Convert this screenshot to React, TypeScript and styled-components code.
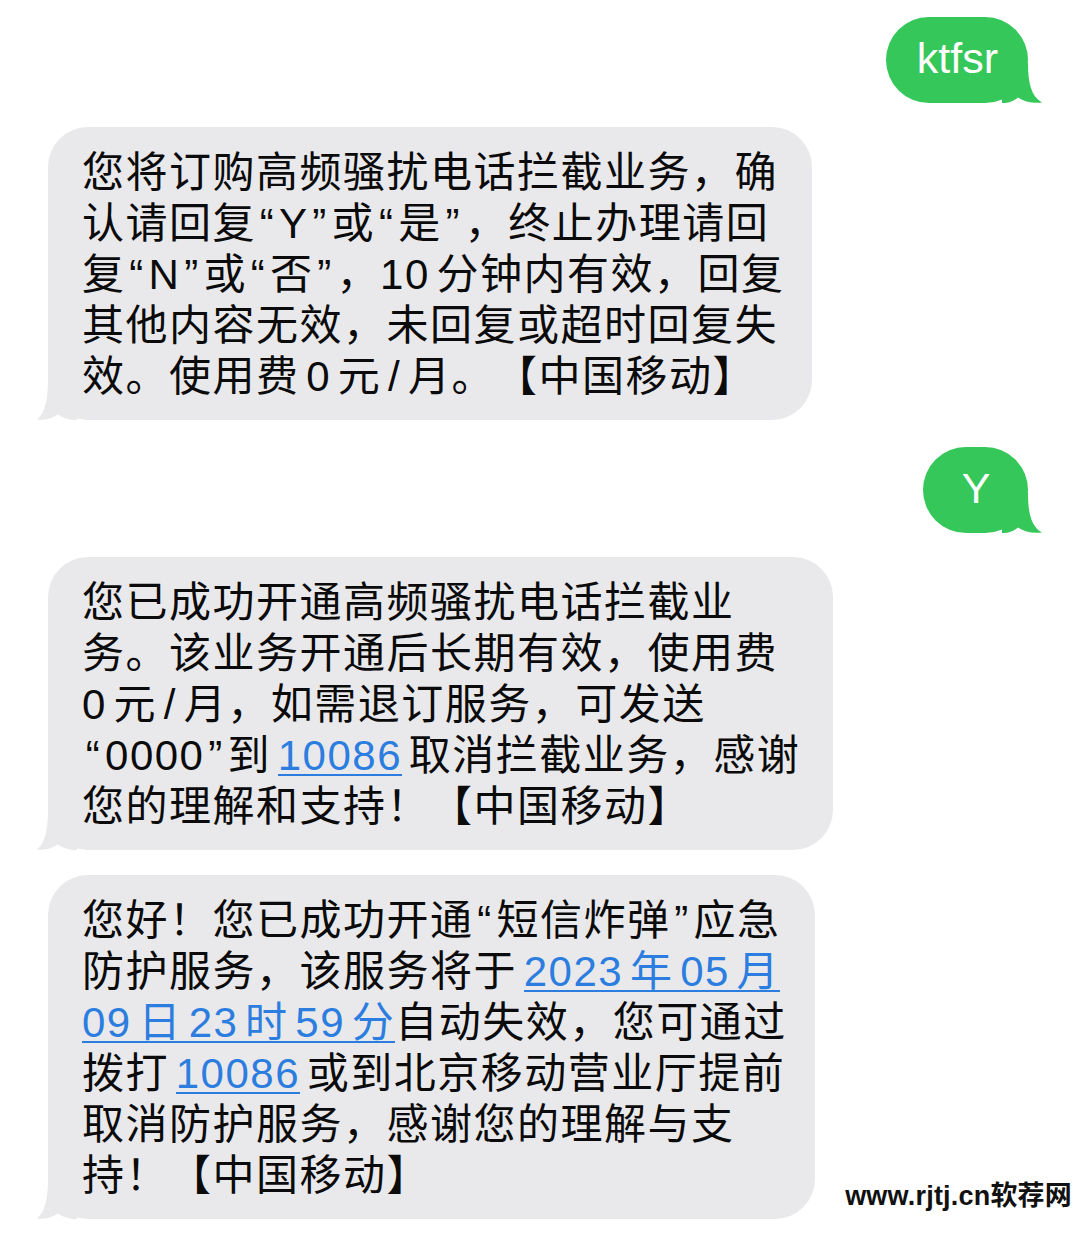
import React from 'react';
import styled, { createGlobalStyle } from 'styled-components';

const GlobalStyle = createGlobalStyle`
  html, body {
    margin: 0;
    padding: 0;
    background: #ffffff;
  }
  body {
    font-family: 'Liberation Sans', 'Noto Sans CJK SC', sans-serif;
    -webkit-font-smoothing: antialiased;
  }
`;

const Page = styled.div`
  position: relative;
  width: 1080px;
  height: 1240px;
  box-sizing: border-box;
  padding: 17px 52px 0 48px;
  background: #ffffff;
  display: flex;
  flex-direction: column;
  overflow: hidden;
`;

const Row = styled.div<{ $side: 'left' | 'right'; $top: number }>`
  display: flex;
  justify-content: ${({ $side }) => ($side === 'right' ? 'flex-end' : 'flex-start')};
  margin-top: ${({ $top }) => `${$top}px`};
`;

const Sent = styled.div`
  position: relative;
  height: 86px;
  min-width: 105px;
  box-sizing: border-box;
  padding: 0 30px 4px 31px;
  display: flex;
  align-items: center;
  justify-content: center;
  background: #35c759;
  border-radius: 43px;
  color: #ffffff;
  font-family: 'Liberation Sans', sans-serif;
  font-size: 43px;
  line-height: 1;
`;

const Received = styled.div<{ $width: number }>`
  position: relative;
  width: ${({ $width }) => `${$width}px`};
  box-sizing: border-box;
  padding: 20px 0 18px 34px;
  background: #e9e9eb;
  border-radius: 40px;
  color: #0b0b0b;
  font-family: 'Liberation Sans', 'Noto Sans CJK SC', sans-serif;
  font-size: 42px;
  letter-spacing: 1.5px;
  text-spacing-trim: space-all;
`;

const Line = styled.div`
  height: 51px;
  line-height: 51px;
  white-space: nowrap;
`;

const Latin = styled.span<{ $l: boolean; $r: boolean }>`
  padding-left: ${({ $l }) => ($l ? '0.16em' : '0')};
  padding-right: ${({ $r }) => ($r ? '0.16em' : '0')};
`;

const Quote = styled.span`
  padding: 0 0.09em;
`;

const Link = styled.span<{ $l: boolean; $r: boolean }>`
  color: #2b7ddf;
  margin-left: ${({ $l }) => ($l ? '0.16em' : '0')};
  margin-right: ${({ $r }) => ($r ? '0.16em' : '0')};
  background: linear-gradient(#2b7ddf, #2b7ddf) 0 calc(100% - 3px) / 100% 2px no-repeat;
`;

const TailSvg = styled.svg<{ $side: 'left' | 'right'; $offset: number }>`
  position: absolute;
  bottom: 0;
  width: 40px;
  height: 40px;
  ${({ $side, $offset }) =>
    $side === 'right'
      ? `right: -${$offset}px;`
      : `left: -${$offset}px; transform: scaleX(-1);`}
`;

const Watermark = styled.div`
  position: absolute;
  right: 8px;
  bottom: 27px;
  font-family: 'Liberation Sans', 'Noto Sans CJK SC', sans-serif;
  font-weight: 700;
  font-size: 27px;
  color: #111111;
  letter-spacing: 0.2px;
`;

const Tail = ({ side, color, offset }: { side: 'left' | 'right'; color: string; offset: number }) => {
  const edge = 40 - offset;
  return (
    <TailSvg $side={side} $offset={offset} viewBox="0 0 40 40">
      <path
        d={`M0 0 H${edge} C${edge} 20 ${edge + 3} 33 40 39.6 C${edge + 4} 40.6 ${edge - 4} 38.5 ${edge - 10} 34.5 C${edge - 14} 38 7 40 0 40 Z`}
        fill={color}
      />
    </TailSvg>
  );
};

type Part = string | { link: string };

const CJK = /[\u4e00-\u9fff]/;
const LATIN_RUN = /^[0-9A-Za-z/]+$/;
const TOKENS = /([0-9A-Za-z/]+|[“”])/;

// iOS puts a little air between CJK and Latin runs; mimic it per run
const spaced = (text: string, before: string, after: string, keyBase: string) => {
  const chunks = text.split(TOKENS).filter((c) => c !== '');
  return chunks.map((chunk, i) => {
    const key = `${keyBase}-${i}`;
    if (chunk === '“' || chunk === '”') return <Quote key={key}>{chunk}</Quote>;
    if (!LATIN_RUN.test(chunk)) return <React.Fragment key={key}>{chunk}</React.Fragment>;
    const prev = i > 0 ? chunks[i - 1].slice(-1) : before;
    const next = i < chunks.length - 1 ? chunks[i + 1][0] : after;
    return (
      <Latin key={key} $l={CJK.test(prev)} $r={CJK.test(next)}>
        {chunk}
      </Latin>
    );
  });
};

const partText = (p: Part) => (typeof p === 'string' ? p : p.link);

const renderLine = (parts: Part[]) =>
  parts.map((part, i) => {
    const before = i > 0 ? partText(parts[i - 1]).slice(-1) : '';
    const after = i < parts.length - 1 ? partText(parts[i + 1])[0] : '';
    if (typeof part === 'string') return <React.Fragment key={i}>{spaced(part, before, after, `${i}`)}</React.Fragment>;
    const text = part.link;
    return (
      <Link
        key={i}
        $l={CJK.test(before) && LATIN_RUN.test(text[0])}
        $r={CJK.test(after) && LATIN_RUN.test(text.slice(-1))}
      >
        {spaced(text, '', '', `${i}`)}
      </Link>
    );
  });

type Message =
  | { from: 'me'; text: string; top: number }
  | { from: 'them'; lines: Part[][]; width: number; top: number };

const messages: Message[] = [
  { from: 'me', text: 'ktfsr', top: 0 },
  {
    from: 'them',
    width: 764,
    top: 24,
    lines: [
      ['您将订购高频骚扰电话拦截业务，确'],
      ['认请回复“Y”或“是”，终止办理请回'],
      ['复“N”或“否”，10分钟内有效，回复'],
      ['其他内容无效，未回复或超时回复失'],
      ['效。使用费0元/月。【中国移动】'],
    ],
  },
  { from: 'me', text: 'Y', top: 27 },
  {
    from: 'them',
    width: 785,
    top: 24,
    lines: [
      ['您已成功开通高频骚扰电话拦截业'],
      ['务。该业务开通后长期有效，使用费'],
      ['0元/月，如需退订服务，可发送'],
      ['“0000”到', { link: '10086' }, '取消拦截业务，感谢'],
      ['您的理解和支持！【中国移动】'],
    ],
  },
  {
    from: 'them',
    width: 767,
    top: 25,
    lines: [
      ['您好！您已成功开通“短信炸弹”应急'],
      ['防护服务，该服务将于', { link: '2023年05月' }],
      [{ link: '09日23时59分' }, '自动失效，您可通过'],
      ['拨打', { link: '10086' }, '或到北京移动营业厅提前'],
      ['取消防护服务，感谢您的理解与支'],
      ['持！【中国移动】'],
    ],
  },
];

const App = () => (
  <>
    <GlobalStyle />
    <Page>
      {messages.map((msg, index) =>
        msg.from === 'me' ? (
          <Row key={index} $side="right" $top={msg.top}>
            <Sent>
              {msg.text}
              <Tail side="right" color="#35c759" offset={14} />
            </Sent>
          </Row>
        ) : (
          <Row key={index} $side="left" $top={msg.top}>
            <Received $width={msg.width}>
              {msg.lines.map((line, i) => (
                <Line key={i}>{renderLine(line)}</Line>
              ))}
              <Tail side="left" color="#e9e9eb" offset={11} />
            </Received>
          </Row>
        ),
      )}
      <Watermark>www.rjtj.cn软荐网</Watermark>
    </Page>
  </>
);

export default App;
